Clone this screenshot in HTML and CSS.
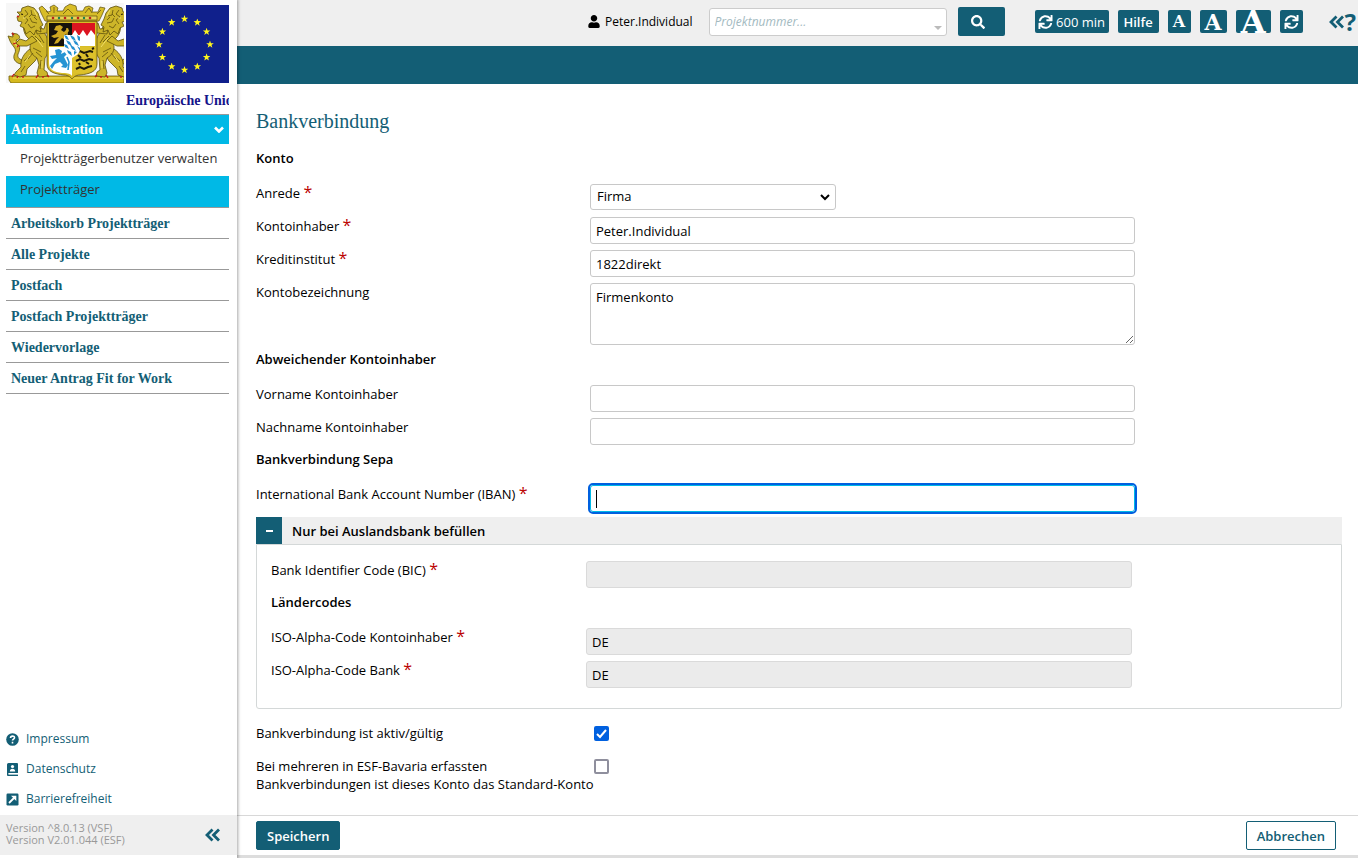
FILE: index.html
```html
<!DOCTYPE html>
<html lang="de">
<head>
<meta charset="utf-8">
<meta name="viewport" content="width=device-width, initial-scale=1">
<title>Bankverbindung</title>
<link rel="stylesheet" href="styles.css">
</head>
<body>
<svg class="defs" aria-hidden="true">
  <symbol id="i-sync" viewBox="0 0 512 512"><path d="M440.65 12.57l4 82.77A247.16 247.16 0 0 0 255.83 8C134.73 8 33.91 94.92 12.29 209.82A12 12 0 0 0 24.09 224h49.05a12 12 0 0 0 11.67-9.26 175.91 175.91 0 0 1 317-56.94l-101.46-4.86a12 12 0 0 0-12.57 12v47.41a12 12 0 0 0 12 12H500a12 12 0 0 0 12-12V12a12 12 0 0 0-12-12h-47.37a12 12 0 0 0-11.98 12.57zM255.83 432a175.61 175.61 0 0 1-146-77.8l101.8 4.87a12 12 0 0 0 12.57-12v-47.4a12 12 0 0 0-12-12H12a12 12 0 0 0-12 12V500a12 12 0 0 0 12 12h47.35a12 12 0 0 0 12-12.6l-4.15-82.57A247.17 247.17 0 0 0 255.83 504c121.11 0 221.93-86.92 243.55-201.82a12 12 0 0 0-11.8-14.18h-49.05a12 12 0 0 0-11.67 9.26A175.86 175.86 0 0 1 255.83 432z"/></symbol>
  <symbol id="i-angles" viewBox="0 0 16 14"><path d="M7.500 1.500L2 7l5.500 5.500M14 1.500L8.500 7l5.500 5.500" fill="none" stroke="currentColor" stroke-width="2.800"/></symbol>
  <symbol id="star" viewBox="-10 -10 20 20"><path d="M0-10L2.400-3.200 9.500-3.100 3.800 1.200 5.900 8.100 0 4-5.900 8.100-3.800 1.200-9.500-3.100-2.400-3.200z"/></symbol>
  <symbol id="lion" viewBox="0 0 60 80" overflow="visible">
    <g stroke="#5e500c" stroke-width=".8" stroke-linejoin="round" fill="#cdb529">
      <path d="M15 61C9 60 6 55 9 50 11 45 6 43 4 38L2 33 7 34 6 30 11 31C15 33 14 37 10 37 15 42 14 47 12 51 11 55 14 57 18 57z"/>
      <path d="M24 46C18 50 14 57 15 64L10 69 8 72 14 74 20 72 21 66 29 58 34 50z"/>
      <path d="M18 20C16 28 20 35 26 38 22 44 24 51 31 55L33 62 31 70 33 74 42 73 41 69 38 67 39 55C45 48 44 38 39 31L34 22 29 18z"/>
      <path d="M30 25L38 26 40 20 44 21 45 26 41 30 31 31zM26 33L20 38 14 36 10 40 13 43 21 43 31 38z"/>
      <path d="M16 5L22 3 28 5 32 10 34 16 37 22 34 24 35 29 30 27 28 32 24 28 20 31 18 25 14 23 16 19 12 18 11 14 14 12 11 9 15 9z"/>
    </g>
    <g fill="none" stroke="#6d5c10" stroke-width=".9">
      <path d="M19 7l3 4-4 3 4 3-3 4M25 7l1 5 4 1M24 15l2 4 5 1M22 21l3 4 4-2M26 11l-3 3M31 17l-3-3M29 33l6 6M33 32l5 8M27 45l8 4M30 49l6 5M18 58l6-5M35 57l-1 9M19 63l-4 6M22 56l5-6"/>
    </g>
    <g stroke="#f0de68" fill="none" stroke-width="1"><path d="M28 7l3 6M30 35l7 9M19 59l5-7M36 58v7M17 15h3M8 38l3 6"/></g>
    <g stroke="#c5121b" stroke-width="1.300" fill="none"><path d="M11 13l2 1M8 71l-2 3M12 73l-1 2M17 73v2M32 72l-2 3M37 73v2M41 72l2 2M43 21l2-3M10 40l-3 1M13 42l-2 2M6 30l2 2"/></g>
    <path d="M15 11l2 .5" stroke="#201b06" stroke-width="1.200"/>
  </symbol>
</svg>
<div class="app">
  <aside class="sidebar">
    <div class="brand">
      <svg class="arms" viewBox="0 0 118 80" role="img" aria-label="Bayerisches Staatswappen">
        <rect width="118" height="80" fill="#f7f7f7"/>
        <path d="M3 73H118V80H5L3 77z" fill="#d5b91f" stroke="#6e5c0d" stroke-width=".8"/><path d="M7 75H118" stroke="#f4df5f"/>
        <use href="#lion" width="60" height="80"/>
        <g transform="translate(132 0) scale(-1 1)"><use href="#lion" width="60" height="80"/></g>
        <path d="M41 18H91V61C91 69 83 71 74 72 69 72 67 75 66 76 65 75 63 72 58 72 49 71 41 69 41 61z" fill="#d8bd27" stroke="#5d4f10" stroke-width=".8"/>
        <path d="M43 20H66V43H43z" fill="#17130c"/>
        <path d="M66 20H89V43H66z" fill="#fff"/>
        <path d="M66 20H89V32L85 27 81 33 77 27 73 33 69 27 66 32z" fill="#dc1420"/>
        <path d="M43 44H66V73C64 70 60 70 56 70 48 69 43 67 43 60z" fill="#fff"/>
        <path d="M66 44H89V60C89 67 84 69 76 70 72 70 68 70 66 73z" fill="#ddc12b"/>
        <path d="M50 23l4-1 3 2-2 3 3 2 4-4 1 3-4 4 3 4 2 3-4-1-4-3-4 5-4 1 2-4 3-3-5 1-3-2 5-2 2-3-4-1z" fill="#d0a922"/><path d="M61 25v12" stroke="#d0a922" stroke-width="1.500"/>
        <path d="M49 47l4-1 3 2-1 3 4-2 3-3 1 3-5 5 2 4 2 4-2 3-5-1 2-2-3-3-5 2-3 5-2-3 4-5 3-3-5 1-2-3 6-1z" fill="#2694d3"/><path d="M61 54l2 5-1 8" stroke="#2694d3" stroke-width="1.600" fill="none"/>
        <g fill="none" stroke="#1c190b" stroke-width="2"><path d="M70 50l4-2 4 2 6-2 3 1M72 52l3 3M80 51l2 3M70 58l4-2 4 2 5-2 4 1M73 60l1 2M80 59l3 2M70 66l4-2 4 2 4-2 4-1M86 46l2-1"/></g>
        <path d="M58 32H74V46C74 51 69 53 66 55 63 53 58 51 58 46z" fill="#fff"/>
        <path d="M58 32l3 1 2 4-3-1zM64 32l4 2 2 4-4-2zM71 32l3 2v4l-2-1zM60 37l4 2 2 4-4-2zM67 37l4 2 2 4-4-2zM58 41l3 1 2 4-4-2zM64 42l4 2 2 4-4-2zM71 43l3 2v3zM61 47l4 2 1 4-4-3zM68 48l3 1-3 3z" fill="#238fcf"/>
        <g stroke="#5d4f10" stroke-width=".7">
          <path d="M35 10L33 5 36 3 39 6 42 9 45 8 44 4 48 2 52 5 51 8 57 8 59 4 64 1 70 3 71 8 77 8 79 4 83 3 87 5 86 9 92 9 94 4 99 5 96 12 93 18H39z" fill="#d8bd27"/>
          <path d="M41 13H91V17H41z" fill="#e9d252"/>
        </g>
        <g fill="#bd241b"><circle cx="47" cy="15" r="1.300"/><circle cx="59" cy="15" r="1.300"/><circle cx="72" cy="15" r="1.300"/><circle cx="84" cy="15" r="1.300"/></g>
        <g fill="#1d844c"><circle cx="53" cy="15" r="1.200"/><circle cx="66" cy="15" r="1.200"/><circle cx="78" cy="15" r="1.200"/></g>
        <path d="M40 8l3 3M48 4v6M57 11l5-5 5 5M79 10l4-5 3 5M91 11l4-4" stroke="#806b17" fill="none"/>
      </svg>
      <div class="union">
        <svg class="flag" viewBox="0 0 103 78" role="img" aria-label="Europaflagge">
          <rect width="103" height="78" fill="#10208c"/>
          <g fill="#fff51d">
            <use href="#star" x="54.500" y="10" width="8" height="8"/><use href="#star" x="67.300" y="13.400" width="8" height="8"/><use href="#star" x="76.600" y="22.700" width="8" height="8"/><use href="#star" x="80" y="35.500" width="8" height="8"/><use href="#star" x="76.600" y="48.300" width="8" height="8"/><use href="#star" x="67.300" y="57.600" width="8" height="8"/><use href="#star" x="54.500" y="61" width="8" height="8"/><use href="#star" x="41.700" y="57.600" width="8" height="8"/><use href="#star" x="32.400" y="48.300" width="8" height="8"/><use href="#star" x="29" y="35.500" width="8" height="8"/><use href="#star" x="32.400" y="22.700" width="8" height="8"/><use href="#star" x="41.700" y="13.400" width="8" height="8"/>
          </g>
        </svg>
        <span class="union-name">Europäische Union</span>
      </div>
    </div>
    <nav class="menu">
      <a class="menu-head" href="#">Administration
        <svg class="chev" viewBox="0 0 10 7"><path d="M1 1.500l4 4 4-4" fill="none" stroke="currentColor" stroke-width="2.600"/></svg></a>
      <a class="sub" href="#">Projektträgerbenutzer verwalten</a>
      <a class="sub active" href="#">Projektträger</a>
      <a class="item" href="#">Arbeitskorb Projektträger</a>
      <a class="item" href="#">Alle Projekte</a>
      <a class="item" href="#">Postfach</a>
      <a class="item" href="#">Postfach Projektträger</a>
      <a class="item" href="#">Wiedervorlage</a>
      <a class="item" href="#">Neuer Antrag Fit for Work</a>
    </nav>
    <nav class="legal">
      <a href="#"><svg viewBox="0 0 13 13"><circle cx="6.500" cy="6.500" r="6.300" fill="currentColor"/><path d="M4.500 5C4.600 2.500 8.500 2.500 8.500 4.700 8.500 6.100 6.500 6.100 6.500 7.600M6.500 8.700v1.700" fill="none" stroke="#fff" stroke-width="1.600"/></svg>Impressum</a>
      <a href="#"><svg viewBox="0 0 13 13"><path d="M2.500 0H11Q12 0 12 1V10H2.500V11.500H12V13H2Q1 13 1 12V1.500Q1 0 2.500 0z" fill="currentColor"/><circle cx="6.500" cy="3.500" r="1.600" fill="#fff"/><path d="M3.800 8.500Q4 5.800 6.500 5.800T9.200 8.500z" fill="#fff"/><path d="M2.500 10.800H12" stroke="#fff" stroke-width=".8"/></svg>Datenschutz</a>
      <a href="#"><svg viewBox="0 0 13 13"><rect x=".5" y=".5" width="12" height="12" rx="1.200" fill="currentColor"/><path d="M3 10L9 4" stroke="#fff" stroke-width="1.800"/><path d="M5 2.700H10.300V8z" fill="#fff"/></svg>Barrierefreiheit</a>
    </nav>
    <div class="version">
      <p>Version ^8.0.13 (VSF)<br>Version V2.01.044 (ESF)</p>
      <button class="collapse" type="button" aria-label="Menü einklappen"><svg viewBox="0 0 16 14"><use href="#i-angles"/></svg></button>
    </div>
  </aside>
  <div class="main">
    <header class="topbar">
      <span class="user"><svg viewBox="0 0 448 512"><path d="M224 256c70.700 0 128-57.300 128-128S294.700 0 224 0 96 57.300 96 128s57.300 128 128 128zm89.600 32h-16.700c-22.200 10.200-46.900 16-72.900 16s-50.600-5.800-72.900-16h-16.700C60.200 288 0 348.200 0 422.400V464c0 26.500 21.500 48 48 48h352c26.500 0 48-21.500 48-48v-41.600c0-74.200-60.200-134.400-134.400-134.400z"/></svg>Peter.Individual</span>
      <input class="project" type="text" placeholder="Projektnummer..." aria-label="Projektnummer">
      <button class="search" type="button" aria-label="Suchen"><svg viewBox="0 0 512 512"><path d="M505 442.700L405.300 343c-4.500-4.500-10.600-7-17-7H372c27.600-35.300 44-79.700 44-128C416 93.100 322.900 0 208 0S0 93.100 0 208s93.100 208 208 208c48.300 0 92.700-16.400 128-44v16.300c0 6.400 2.500 12.500 7 17l99.700 99.700c9.400 9.400 24.600 9.400 33.900 0l28.300-28.300c9.400-9.400 9.400-24.600.1-34zM208 336c-70.700 0-128-57.200-128-128 0-70.700 57.200-128 128-128 70.700 0 128 57.200 128 128 0 70.700-57.200 128-128 128z"/></svg></button>
      <div class="tools">
        <button class="tool timer" type="button"><svg><use href="#i-sync"/></svg>600 min</button>
        <button class="tool help" type="button">Hilfe</button>
        <button class="tool a-small" type="button">A</button>
        <button class="tool a-mid" type="button">A</button>
        <button class="tool a-big" type="button">A</button>
        <button class="tool reload" type="button" aria-label="Neu laden"><svg><use href="#i-sync"/></svg></button>
      </div>
      <a class="hint" href="#" aria-label="Hilfe einblenden"><svg viewBox="0 0 16 14"><use href="#i-angles"/></svg>?</a>
    </header>
    <div class="band"></div>
    <form class="form">
      <div class="content">
        <h1>Bankverbindung</h1>
        <h2>Konto</h2>
        <div class="rows">
          <div class="row"><label for="anrede">Anrede <b class="req">*</b></label><select id="anrede"><option>Firma</option></select></div>
          <div class="row"><label for="inhaber">Kontoinhaber <b class="req">*</b></label><input class="field" id="inhaber" type="text" value="Peter.Individual"></div>
          <div class="row"><label for="institut">Kreditinstitut <b class="req">*</b></label><input class="field" id="institut" type="text" value="1822direkt"></div>
          <div class="row"><label for="bez">Kontobezeichnung</label><textarea class="field" id="bez">Firmenkonto</textarea></div>
        </div>
        <h2>Abweichender Kontoinhaber</h2>
        <div class="rows">
          <div class="row"><label for="vorname">Vorname Kontoinhaber</label><input class="field" id="vorname" type="text"></div>
          <div class="row"><label for="nachname">Nachname Kontoinhaber</label><input class="field" id="nachname" type="text"></div>
        </div>
        <h2>Bankverbindung Sepa</h2>
        <div class="rows">
          <div class="row"><label for="iban">International Bank Account Number (IBAN) <b class="req">*</b></label><input class="field current" id="iban" type="text"></div>
        </div>
        <section class="panel">
          <div class="panel-head"><button class="toggle" type="button" aria-label="Einklappen"></button><h2>Nur bei Auslandsbank befüllen</h2></div>
          <div class="panel-body">
            <div class="row"><label for="bic">Bank Identifier Code (BIC) <b class="req">*</b></label><input class="field" id="bic" type="text" disabled></div>
            <h2>Ländercodes</h2>
            <div class="rows">
              <div class="row"><label for="iso1">ISO-Alpha-Code Kontoinhaber <b class="req">*</b></label><input class="field" id="iso1" type="text" value="DE" disabled></div>
              <div class="row"><label for="iso2">ISO-Alpha-Code Bank <b class="req">*</b></label><input class="field" id="iso2" type="text" value="DE" disabled></div>
            </div>
          </div>
        </section>
        <div class="rows">
          <div class="row"><label for="aktiv">Bankverbindung ist aktiv/gültig</label><input class="tick" id="aktiv" type="checkbox" checked></div>
          <div class="row"><label for="standard">Bei mehreren in ESF-Bavaria erfassten<br>Bankverbindungen ist dieses Konto das Standard-Konto</label><input class="tick" id="standard" type="checkbox"></div>
        </div>
      </div>
      <footer class="actions">
        <button class="save" type="submit">Speichern</button>
        <button class="cancel" type="button">Abbrechen</button>
      </footer>
    </form>
  </div>
</div>
</body>
</html>
```
FILE: styles.css
```css
:root {
  --petrol: #135e75;
  --cyan: #00b9e6;
  --grey: #efefef;
  --sans: "Open Sans", "Noto Sans", sans-serif;
  --serif: "Liberation Serif", serif;
}
* { box-sizing: border-box; }
body {
  margin: 0;
  font: 13px/18px var(--sans);
  color: #000;
  background: #fff;
}
a { color: var(--petrol); text-decoration: none; }
button, input, select, textarea { font: inherit; color: inherit; margin: 0; }
button { padding: 0; border: 0; cursor: pointer; }
h1, h2, p { margin: 0; }
svg { display: block; flex: none; fill: currentColor; }
.defs { position: absolute; width: 0; height: 0; }
.app { display: flex; min-height: 100vh; }

/* Sidebar */
.sidebar {
  position: relative;
  flex: none;
  width: 237px;
  display: flex;
  flex-direction: column;
  padding-bottom: 3px;
  background: #fff;
  box-shadow: 0 0 3px 1px rgba(0, 0, 0, .35);
}
.brand {
  display: flex;
  gap: 2px;
  height: 114px;
  margin: 0 8px 0 6px;
  padding-top: 3px;
  overflow: hidden;
}
.arms { width: 118px; height: 80px; }
.union { flex: 1; min-width: 0; padding-top: 2px; overflow: hidden; }
.flag { width: 103px; height: 78px; }
.union-name {
  display: block;
  padding-top: 8px;
  font: bold 14px/20px var(--serif);
  color: #14148a;
  white-space: nowrap;
}
.menu {
  display: flex;
  flex-direction: column;
  margin: 0 8px 0 6px;
  border-top: 1px solid #999;
}
.menu-head, .item { padding: 0 5px; font: bold 14px/30px var(--serif); }
.menu-head {
  display: flex;
  justify-content: space-between;
  align-items: center;
  height: 29px;
  color: #fff;
  background: var(--cyan);
}
.chev { width: 10px; height: 7px; }
.sub { height: 32px; padding: 0 0 0 14px; line-height: 28px; color: #333; white-space: nowrap; }
.sub.active { background: var(--cyan); border-bottom: 1px solid #999; line-height: 26px; }
.item { height: 31px; border-bottom: 1px solid #999; line-height: 32px; }
.legal {
  display: flex;
  flex-direction: column;
  gap: 12px;
  margin-top: auto;
  padding: 0 6px 7px;
  font-size: 12px;
}
.legal a { display: flex; align-items: center; gap: 7px; }
.legal svg { width: 13px; height: 13px; }
.version {
  display: flex;
  justify-content: space-between;
  align-items: center;
  height: 40px;
  padding: 0 16px 0 6px;
  font-size: 11px;
  line-height: 12px;
  color: #999;
  background: var(--grey);
}
.version p { padding-bottom: 2px; }
.collapse { color: var(--petrol); background: none; }
.collapse svg { width: 16px; height: 14px; }

/* Header */
.main { flex: 1; min-width: 0; display: flex; flex-direction: column; }
.topbar {
  display: flex;
  justify-content: flex-end;
  align-items: center;
  height: 46px;
  padding: 0 2px 3px 0;
  background: var(--grey);
}
.user { display: flex; align-items: center; gap: 5px; margin-right: 16px; font-size: 12px; }
.user svg { width: 12px; height: 13px; }
.project {
  width: 238px;
  height: 28px;
  margin-right: 11px;
  padding: 0 5px;
  font-size: 12px;
  border: 1px solid #ccc;
  border-radius: 3px;
  background: #fff url("data:image/svg+xml,%3Csvg xmlns='http://www.w3.org/2000/svg' width='8' height='4'%3E%3Cpath d='M0 0h8L4 4z' fill='%23bbb'/%3E%3C/svg%3E") no-repeat right 4px bottom 5px;
}
.project::placeholder { color: #a3babf; font-style: italic; opacity: 1; }
.search {
  display: grid;
  place-items: center;
  width: 47px;
  height: 29px;
  margin-right: 30px;
  padding-right: 7px;
  color: #fff;
  background: var(--petrol);
  border-radius: 2px;
}
.search svg { width: 14px; height: 14px; }
.tools { display: flex; gap: 9px; margin-right: 26px; }
.tool {
  display: flex;
  justify-content: center;
  align-items: center;
  gap: 3px;
  height: 23px;
  color: #fff;
  background: var(--petrol);
  border-radius: 2px;
}
.tool svg { width: 15px; height: 14px; }
.timer { width: 74px; }
.help { width: 41px; font-weight: 600; }
.a-small, .a-mid, .a-big { font-family: "DejaVu Serif", serif; font-weight: bold; line-height: 24px; }
.a-small { width: 23px; font-size: 16px; }
.a-mid { width: 27px; font-size: 22px; }
.a-big { width: 35px; font-size: 32px; }
.reload { width: 23px; }
.hint { display: flex; align-items: center; font: bold 24px/24px "Noto Sans", sans-serif; }
.hint svg { width: 16px; height: 14px; }
.band { height: 38px; background: var(--petrol); }

/* Form */
.form { flex: 1; display: flex; flex-direction: column; border-bottom: 3px solid #ddd; }
.content { flex: 1; padding: 23px 16px 20px 19px; }
h1 { margin-bottom: 14px; font: 20px/28px var(--serif); color: var(--petrol); }
h2 { margin: 0 0 17px; font-size: 13px; font-weight: 600; line-height: 18px; }
.rows { display: grid; gap: 6px; }
.rows + h2, .row + h2 { margin-top: 5px; }
.row {
  display: grid;
  grid-template-columns: 334px minmax(0, 545px);
  align-items: start;
  min-height: 27px;
}
.row label { white-space: nowrap; }
.req { color: #b00; font-size: 16px; font-weight: normal; line-height: 1px; }
.field, select {
  width: 100%;
  height: 27px;
  padding: 0 5px;
  background-color: #fff;
  border: 1px solid #c8c8c8;
  border-radius: 3px;
}
.field:disabled { color: #000; background: #ebebeb; border-color: #dadada; }
textarea.field { display: block; height: 62px; padding: 4px 5px; resize: vertical; }
.current {
  border-color: #00b9e6;
  outline: 2px solid #0060df;
  background: #fff linear-gradient(#000, #000) no-repeat 5px center / 1px 18px;
}
select {
  width: 246px;
  height: 26px;
  padding: 0 6px 2px;
  appearance: none;
  background: #fff url("data:image/svg+xml,%3Csvg xmlns='http://www.w3.org/2000/svg' width='10' height='7'%3E%3Cpath d='M1 1l4 4 4-4' fill='none' stroke='%23000' stroke-width='2'/%3E%3C/svg%3E") no-repeat right 5px center;
}
.panel { margin: 5px 0 15px; }
.panel-head { display: flex; height: 27px; background: var(--grey); }
.panel-head h2 { margin: 0 0 0 10px; line-height: 28px; }
.toggle { display: grid; place-items: center; width: 26px; background: var(--petrol); }
.toggle::before { content: ""; width: 7px; height: 2px; background: #fff; }
.panel-body { padding: 16px 14px 20px; border: 1px solid #d4d8d8; border-radius: 0 0 3px 3px; }
.panel-body .row { grid-template-columns: 315px minmax(0, 546px); }
.tick {
  display: grid;
  place-items: center;
  width: 15px;
  height: 15px;
  margin: 2px 4px;
  appearance: none;
  background: #fff;
  border: 2px solid #8f8f9d;
  border-radius: 2px;
}
.tick:checked {
  border-color: #0060df;
  background: #0060df url("data:image/svg+xml,%3Csvg xmlns='http://www.w3.org/2000/svg' width='11' height='11'%3E%3Cpath d='M1 6l3 3 6-7' fill='none' stroke='%23fff' stroke-width='2'/%3E%3C/svg%3E") no-repeat center;
}
.actions {
  display: flex;
  justify-content: space-between;
  align-items: center;
  height: 40px;
  padding: 0 22px 0 19px;
  border-top: 1px solid #d8d8d8;
}
.actions button { height: 29px; padding: 0 10px; font-weight: 600; border: 1px solid var(--petrol); border-radius: 2px; }
.actions .save { color: #fff; background: var(--petrol); }
.actions .cancel { color: var(--petrol); background: #fff; }
```
